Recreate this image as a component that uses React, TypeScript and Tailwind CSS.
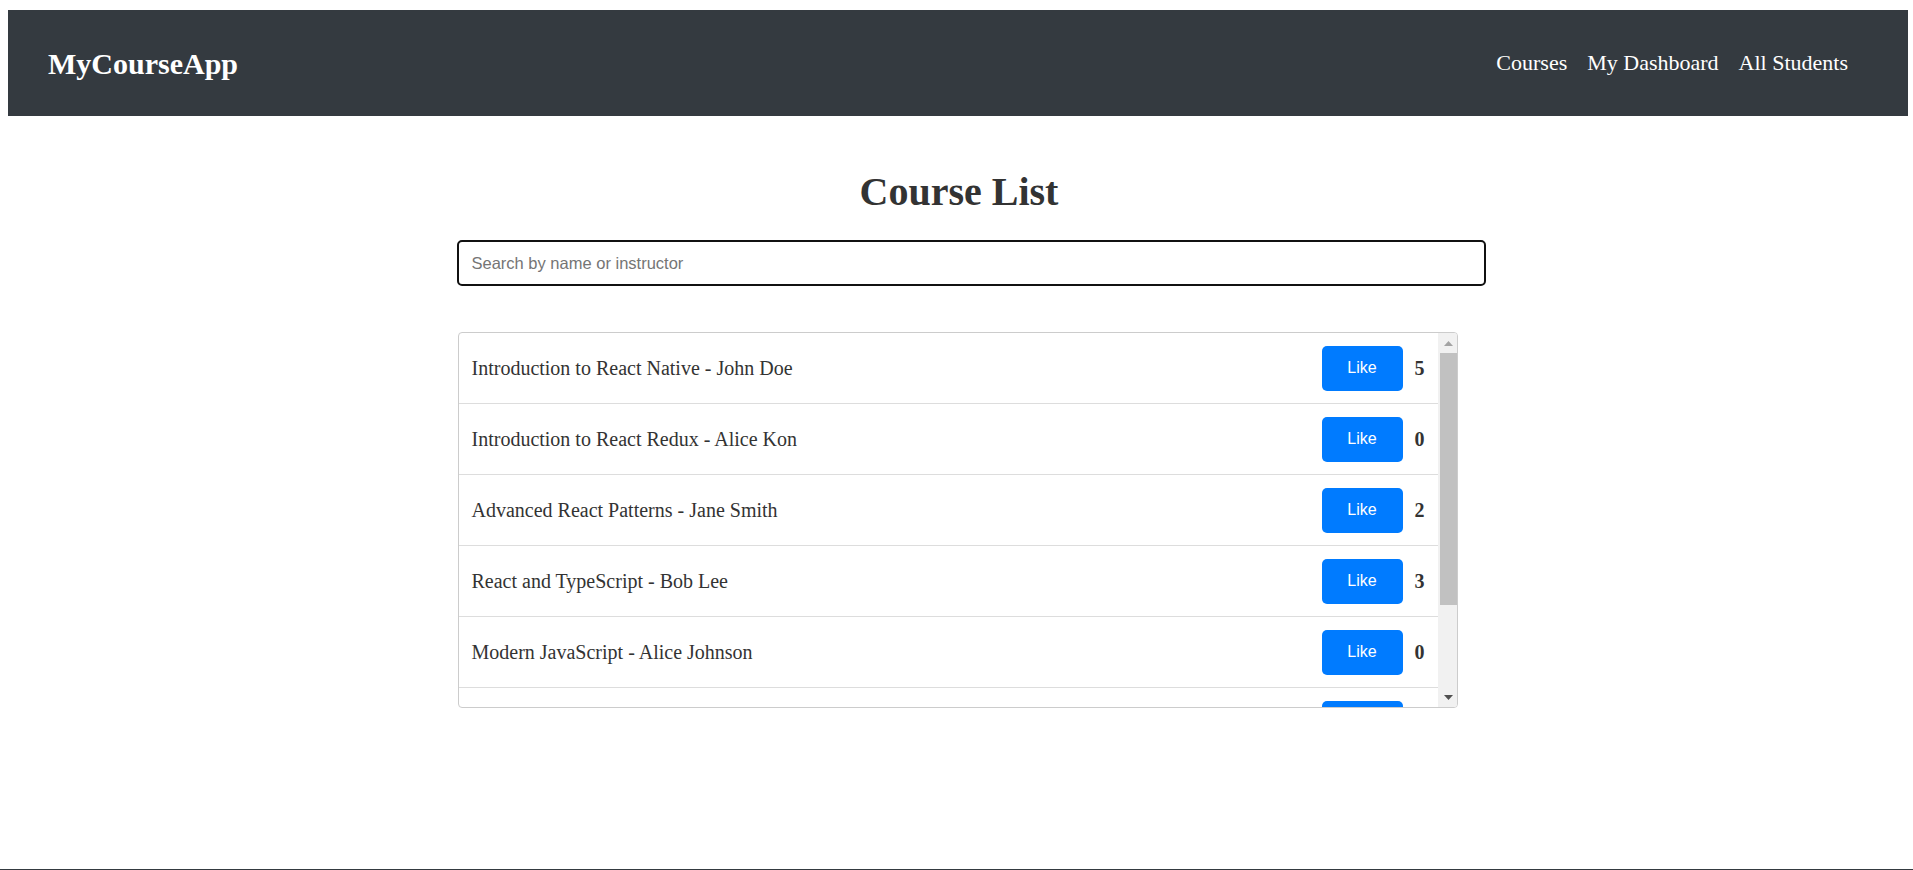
import React from "react";

const courses = [
  { title: "Introduction to React Native", instructor: "John Doe", likes: 5 },
  { title: "Introduction to React Redux", instructor: "Alice Kon", likes: 0 },
  { title: "Advanced React Patterns", instructor: "Jane Smith", likes: 2 },
  { title: "React and TypeScript", instructor: "Bob Lee", likes: 3 },
  { title: "Modern JavaScript", instructor: "Alice Johnson", likes: 0 },
  { title: "Node.js Essentials", instructor: "Mike Brown", likes: 1 },
];

export default function App() {
  return (
    <div className="h-[870px] overflow-hidden flex flex-col bg-white font-['Liberation_Serif',serif] text-[#333]">
      <header className="mt-[10px] ml-[8px] mr-[5px] h-[106px] bg-[#343a40] flex items-center justify-between pl-[40px] pr-[60px]">
        <div className="text-[30px] font-bold text-white">MyCourseApp</div>
        <nav className="flex gap-[20px] text-[22px] text-white pb-[2px]">
          <a>Courses</a>
          <a>My Dashboard</a>
          <a>All Students</a>
        </nav>
      </header>

      <main className="flex-1 flex flex-col items-center">
        <div className="w-[1000px] flex flex-col">
          <h1 className="mt-[56px] text-center text-[40px] leading-[40px] font-bold text-[#333] pl-[5px]">
            Course List
          </h1>
          <input
            type="text"
            placeholder="Search by name or instructor"
            className="mt-[28px] w-[1029px] h-[46px] border-2 border-[#111] rounded-[5px] px-[13px] font-['Liberation_Sans',Arial,sans-serif] text-[16.5px] placeholder:text-[#757575] outline-none"
          />
          <div className="mt-[46px] ml-[1px] w-[1000px] h-[376px] border border-[#ccc] rounded-[4px] flex overflow-hidden">
            <ul className="flex-1 overflow-hidden">
              {courses.map((c, i) => (
                <li
                  key={i}
                  className="h-[71px] border-b border-[#ddd] flex items-center justify-between pl-[13px] pr-[13px]"
                >
                  <span className="text-[20px] text-[#333]">
                    {c.title} - {c.instructor}
                  </span>
                  <div className="flex items-center gap-[12px]">
                    <button className="w-[81px] h-[45px] rounded-[5px] bg-[#007bff] text-white text-[16px] font-['Liberation_Sans',Arial,sans-serif]">
                      Like
                    </button>
                    <span className="w-[10px] text-[20px] font-bold text-[#333]">{c.likes}</span>
                  </div>
                </li>
              ))}
            </ul>
            <div className="w-[19px] bg-[#f1f1f1] flex flex-col items-stretch">
              <div className="h-[20px] flex items-center justify-center pl-[2px]">
                <svg width="9" height="5" viewBox="0 0 9 5">
                  <polygon points="0,5 9,5 4.5,0" fill="#a3a3a3" />
                </svg>
              </div>
              <div className="h-[252px] ml-[2px] bg-[#c1c1c1]" />
              <div className="flex-1" />
              <div className="h-[20px] flex items-center justify-center pl-[2px]">
                <svg width="9" height="5" viewBox="0 0 9 5">
                  <polygon points="0,0 9,0 4.5,5" fill="#505050" />
                </svg>
              </div>
            </div>
          </div>
        </div>
      </main>

      <footer className="h-[1px] shrink-0 bg-[#343a40]" />
    </div>
  );
}
